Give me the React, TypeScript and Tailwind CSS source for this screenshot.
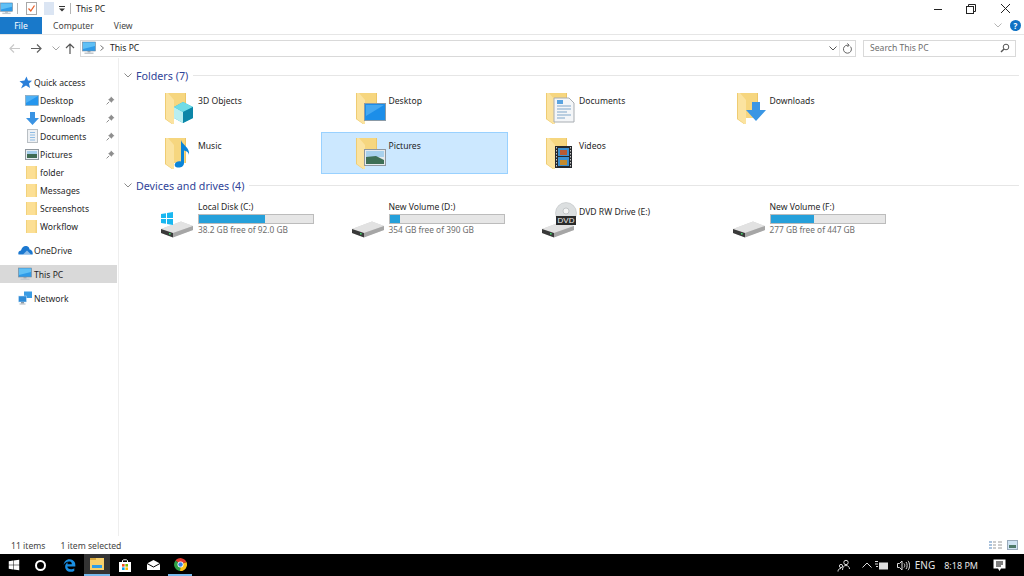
import type { ReactNode } from "react"
import { FaEdgeLegacy, FaWindows } from "react-icons/fa"

const font = "font-['Noto_Sans','Open_Sans',sans-serif]"

function Monitor({ size = 14 }: { size?: number }) {
  return (
    <svg width={size} height={size} viewBox="0 0 14 14">
      <rect x="0.5" y="1" width="13" height="9" fill="#2f9be8" stroke="#7d8a96" strokeWidth="0.6" />
      <polygon points="1,1.5 13,1.5 13,5 1,8" fill="#5fc0f5" />
      <rect x="5.5" y="10" width="3" height="1.5" fill="#9aa5ae" />
      <rect x="2.5" y="11.5" width="9" height="1.5" fill="#c2c8cd" />
    </svg>
  )
}

function SmallFolder() {
  return (
    <svg width="12" height="15" viewBox="0 0 12 15">
      <rect x="0" y="1" width="11" height="13" rx="1" fill="#fcdf94" />
      <rect x="9.5" y="1" width="1.5" height="13" fill="#f2d27c" />
      <rect x="0" y="1" width="1" height="13" fill="#f2d27c" />
    </svg>
  )
}

function Pin() {
  return (
    <svg width="9" height="9" viewBox="0 0 9 9">
      <path d="M5 0.5 L8.5 4 L7 4.6 L5.6 6.8 L2.2 3.4 L4.4 2 Z" fill="#8e8e8e" />
      <path d="M3.2 5.8 L0.6 8.4" stroke="#8e8e8e" strokeWidth="1" />
    </svg>
  )
}

function Star() {
  return (
    <svg width="13" height="13" viewBox="0 0 13 13">
      <polygon points="7.5,0.5 9,4.5 13,4.8 10,7.4 11,12 7,9.6 2,12.4 4,8 0.5,5.2 5.5,4.5" fill="#2a7fd9" />
    </svg>
  )
}

function BlueDesktop() {
  return (
    <svg width="14" height="11" viewBox="0 0 14 11">
      <rect x="0.5" y="0.5" width="13" height="10" fill="#2496ee" stroke="#8aa0b0" strokeWidth="0.6" />
      <polygon points="1,1 13,1 1,8" fill="#4fb1f5" />
    </svg>
  )
}

function DownArrow({ w = 13, h = 13 }: { w?: number; h?: number }) {
  return (
    <svg width={w} height={h} viewBox="0 0 13 13">
      <polygon points="4,0 9,0 9,6 13,6 6.5,13 0,6 4,6" fill="#3a93e3" />
    </svg>
  )
}

function DocSmall() {
  return (
    <svg width="11" height="14" viewBox="0 0 11 14">
      <rect x="0.5" y="0.5" width="10" height="13" fill="#eef1f4" stroke="#b9bfc4" />
      <path d="M3 3.5h5M3 6h5M3 8.5h5M3 11h5" stroke="#8fbce4" strokeWidth="1" />
    </svg>
  )
}

function PicSmall() {
  return (
    <svg width="14" height="11" viewBox="0 0 14 11">
      <rect x="0.5" y="0.5" width="13" height="10" fill="#e8eef2" stroke="#8f979e" />
      <rect x="2" y="2" width="10" height="3" fill="#a4cdea" />
      <rect x="2" y="5" width="10" height="4" fill="#3f6b52" />
    </svg>
  )
}

function Cloud() {
  return (
    <svg width="15" height="10" viewBox="0 0 15 10">
      <path d="M0.5 9.5 C-0.3 7 1.5 5.6 3 5.6 C3.6 2.6 6 0.5 8.5 1 C10.5 1.4 11.5 3 11.6 4.6 C13.6 4.6 15.2 7 14.6 9.5 Z" fill="#1b78d0" />
      <path d="M5 9.5 L9 5.4 L13 9.5 Z" fill="#fff" opacity="0.5" />
    </svg>
  )
}

function NetworkIcon() {
  return (
    <svg width="15" height="14" viewBox="0 0 15 14">
      <rect x="6" y="0.5" width="8" height="6.5" fill="#3a9be3" />
      <rect x="0.5" y="5" width="8" height="6" fill="#2e8ad6" stroke="#cfe5f7" strokeWidth="0.5" />
      <rect x="3" y="11" width="3" height="1.5" fill="#8b98a3" />
      <rect x="1.5" y="12.5" width="6" height="1" fill="#a9b3bb" />
    </svg>
  )
}

function Chevron({ className = "" }: { className?: string }) {
  return (
    <svg width="8" height="5" viewBox="0 0 8 5" className={className}>
      <polyline points="0.5,0.5 4,4 7.5,0.5" fill="none" stroke="currentColor" strokeWidth="1" />
    </svg>
  )
}

function NavRow({ icon, label, pin, indent, active }: { icon: ReactNode; label: string; pin?: boolean; indent?: boolean; active?: boolean }) {
  return (
    <div className={`flex h-[18px] w-[117px] items-center ${active ? "bg-[#d9d9d9]" : ""}`}>
      <div className={`flex w-[16px] justify-center ${indent ? "ml-[24px]" : "ml-[17px]"}`}>{icon}</div>
      <span className={`${indent ? "ml-[0px]" : "ml-[1px]"} pt-[2px] text-[#1f1f1f]`}>{label}</span>
      {pin && (
        <span className="ml-auto mr-[2px]">
          <Pin />
        </span>
      )}
    </div>
  )
}

function BigFolder({ children }: { children?: ReactNode }) {
  return (
    <svg width="38" height="34" viewBox="0 0 38 34">
      <polygon points="0,2 21,2 21,27 7,27 0,27" fill="#f6d67f" />
      <polygon points="20,2 21,2 21,27 20,27" fill="#ecc668" />
      <polygon points="0,2 3,2 9,9 9,33 7,33 0,28" fill="#fbe3a0" />
      <polygon points="0,2 1,2 1,28 7,32.5 7,33 0,28" fill="#efcc72" />
      {children}
    </svg>
  )
}

const folderArt: Record<string, ReactNode> = {
  "3D Objects": (
    <>
      <polygon points="9,16 18,11 28,16 28,27 18,32 9,27" fill="#2fb5d0" />
      <polygon points="9,16 18,21 18,32 9,27" fill="#b9eef0" />
      <polygon points="9,16 18,11 28,16 18,21" fill="#6fdbe6" />
      <polygon points="18,21 28,16 28,27 18,32" fill="#0d86a8" />
    </>
  ),
  Desktop: (
    <>
      <rect x="8.5" y="12.5" width="21" height="17" fill="#1c8ee9" stroke="#8b9aa6" />
      <polygon points="10,14 28,14 10,25" fill="#45a8f1" />
    </>
  ),
  Documents: (
    <>
      <polygon points="8,7 23,7 28,12 28,31 8,31" fill="#f4f6f8" stroke="#a8adb2" />
      <path d="M11 15h14M11 18h14M11 21h10M11 24h14M11 27h8" stroke="#7ea6c9" strokeWidth="1" />
      <rect x="11" y="9" width="6" height="4" fill="#5aa4e0" />
    </>
  ),
  Downloads: (
    <polygon points="15,11 23,11 23,19 29,19 19,30 9,19 15,19" fill="#3a96e4" />
  ),
  Music: (
    <path d="M16 4 C17 9 25 11 24 19 C23.6 16 21 15 19 14.6 L19 27 C19 30.5 15.5 32 12.5 31.5 C9 31 9 27.5 11.5 26 C13 25 15 25 16 25.6 Z" fill="#0a84d8" />
  ),
  Pictures: (
    <>
      <rect x="8.5" y="13.5" width="21" height="16" fill="#e6eaee" stroke="#8f979e" />
      <rect x="10" y="15" width="18" height="6" fill="#a8d1ed" />
      <polygon points="10,21 20,20 28,24 28,28 10,28" fill="#3e6f56" />
    </>
  ),
  Videos: (
    <>
      <rect x="9" y="10" width="17" height="22" fill="#25282c" />
      <rect x="12" y="12" width="11" height="8" fill="#3b8fd0" />
      <rect x="12" y="21" width="11" height="9" fill="#3b8fd0" />
      <rect x="14" y="14" width="7" height="5" fill="#b95a32" />
      <rect x="14" y="24" width="7" height="5" fill="#c48b2f" />
      <path d="M10.5 11v20M24.5 11v20" stroke="#c7c7c7" strokeWidth="1" strokeDasharray="1.5 1.5" />
    </>
  ),
}

function FolderTile({ name, selected }: { name: string; selected?: boolean }) {
  return (
    <div className={`flex h-[42px] w-[187px] border ${selected ? "border-[#99d1ff] bg-[#cce8ff]" : "border-transparent"}`}>
      <div className="ml-[34px] mt-[3px] w-[33px]">
        <BigFolder>{folderArt[name]}</BigFolder>
      </div>
      <span className="mt-[9px] text-[#1f1f1f]">{name}</span>
    </div>
  )
}

function DiskIcon({ windows, dvd }: { windows?: boolean; dvd?: boolean }) {
  return (
    <svg width="34" height="30" viewBox="0 0 34 30" className="overflow-visible">
      {dvd && (
        <>
          <circle cx="25" cy="5" r="10.5" fill="#dcdfe0" stroke="#b4b8ba" strokeWidth="0.5" />
          <circle cx="25" cy="3" r="3" fill="#f5f6f6" stroke="#a9adaf" strokeWidth="0.6" />
        </>
      )}
      <polygon points="1,21 21,13.5 33,18 33,22 13,29 1,25" fill="#d3d3d3" />
      <polygon points="1,21 13,25 33,18 21,13.5" fill="#e2e2e2" />
      <polygon points="1,21 13,25 13,29.5 1,25" fill="#3a3a3a" />
      <polygon points="13,25 33,18 33,22 13,29.5" fill="#a6a6a6" />
      <rect x="9" y="25" width="1.6" height="1.6" fill="#45d06a" />
      {windows && (
        <g fill="#19b7f0">
          <polygon points="1,6 6,5.2 6,10 1,10" />
          <polygon points="7,5 13,4 13,10 7,10" />
          <polygon points="1,11 6,11 6,15.8 1,15" />
          <polygon points="7,11 13,11 13,17 7,16" />
        </g>
      )}
      {dvd && (
        <>
          <rect x="15" y="8" width="20" height="9" fill="#2b2b2b" />
          <text x="25" y="15.4" textAnchor="middle" fontSize="8" fill="#ededed" fontFamily="Liberation Sans">
            DVD
          </text>
        </>
      )}
    </svg>
  )
}

function DriveTile({ name, free, used, windows, dvd }: { name: string; free?: string; used?: number; windows?: boolean; dvd?: boolean }) {
  return (
    <div className="flex h-[42px] w-[187px] border border-transparent">
      <div className="ml-[29px] mt-[9px] w-[38px]">
        <DiskIcon windows={windows} dvd={dvd} />
      </div>
      {free ? (
        <div className="flex flex-col pt-[1px]">
          <span className="h-[14px] leading-[14px] text-[#1f1f1f]">{name}</span>
          <div className="mt-[0px] h-[10px] w-[116px] border border-[#bcbcbc] bg-[#e6e6e6]">
            <div className="h-full bg-[#26a0da]" style={{ width: `${used}%` }} />
          </div>
          <span className="h-[12px] text-[8.3px] leading-[12px] text-[#6d6d6d]">{free}</span>
        </div>
      ) : (
        <span className="mt-[6px] leading-[14px] text-[#1f1f1f]">{name}</span>
      )}
    </div>
  )
}

function SectionHeader({ title }: { title: string }) {
  return (
    <div className="flex h-[16px] items-center pl-[5px] pr-[5px]">
      <Chevron className="text-[#8b8b8b]" />
      <span className="ml-[4px] pt-[2px] text-[10.7px] text-[#2f4398]">{title}</span>
      <div className="ml-[5px] h-px flex-1 bg-[#e6e6e6]" />
    </div>
  )
}

function TitleBar() {
  return (
    <div className="flex h-[17px] items-center">
      <Monitor size={13} />
      <div className="ml-[4px] h-[11px] w-px bg-[#b5b5b5]" />
      <svg width="11" height="13" viewBox="0 0 11 13" className="ml-[8px]">
        <rect x="0.5" y="0.5" width="10" height="12" fill="#fff" stroke="#a8a8a8" />
        <polyline points="2.5,6.5 4.8,9 8.5,3.5" fill="none" stroke="#e8622c" strokeWidth="1.3" />
      </svg>
      <svg width="11" height="13" viewBox="0 0 11 13" className="ml-[7px]">
        <rect x="0" y="0" width="10" height="13" fill="#dbe5f3" />
      </svg>
      <svg width="6" height="6" viewBox="0 0 6 6" className="ml-[4px]">
        <rect x="0" y="0" width="6" height="1" fill="#333" />
        <polygon points="0,2.5 6,2.5 3,5.5" fill="#333" />
      </svg>
      <div className="ml-[5px] h-[11px] w-px bg-[#b5b5b5]" />
      <span className="ml-[5px] pt-[2px] text-[#222]">This PC</span>
      <div className="ml-auto flex items-center">
        <svg width="10" height="10" viewBox="0 0 10 10">
          <path d="M1 5.5h8" stroke="#222" />
        </svg>
        <svg width="10" height="10" viewBox="0 0 10 10" className="ml-[23px]">
          <rect x="0.5" y="2.5" width="7" height="7" fill="#fff" stroke="#222" />
          <path d="M2.5 2V0.5H9.5V7.5H8" fill="none" stroke="#222" />
        </svg>
        <svg width="11" height="11" viewBox="0 0 11 11" className="ml-[24px] mr-[13px]">
          <path d="M1 1L10 10M10 1L1 10" stroke="#222" strokeWidth="1" />
        </svg>
      </div>
    </div>
  )
}

function RibbonTabs() {
  return (
    <div className="flex h-[18px] items-stretch border-b border-[#e6e6e6]">
      <div className="flex w-[42px] items-center justify-center bg-[#1979ca] pt-[2px] text-white">File</div>
      <span className="ml-[11px] self-center pt-[2px] text-[#444]">Computer</span>
      <span className="ml-[20px] self-center pt-[2px] text-[#444]">View</span>
      <div className="ml-auto mr-[3px] flex items-center">
        <Chevron className="mr-[8px] text-[#b5b5b5]" />
        <div className="flex h-[11px] w-[11px] items-center justify-center rounded-full bg-[#0f72c4] text-[8px] font-bold text-white">?</div>
      </div>
    </div>
  )
}

function AddressBar() {
  return (
    <div className="flex h-[23px] items-center pt-[3px]">
      <svg width="11" height="9" viewBox="0 0 11 9" className="ml-[9px] text-[#c9c9c9]">
        <path d="M11 4.5H1M5 0.5L1 4.5L5 8.5" fill="none" stroke="currentColor" strokeWidth="1.2" />
      </svg>
      <svg width="11" height="9" viewBox="0 0 11 9" className="ml-[11px] text-[#5f5f5f]">
        <path d="M0 4.5H10M6 0.5L10 4.5L6 8.5" fill="none" stroke="currentColor" strokeWidth="1.2" />
      </svg>
      <Chevron className="ml-[10px] text-[#a5a5a5]" />
      <svg width="10" height="11" viewBox="0 0 10 11" className="ml-[5px] text-[#555]">
        <path d="M5 11V1M1 5L5 1L9 5" fill="none" stroke="currentColor" strokeWidth="1.2" />
      </svg>
      <div className="ml-[5px] flex h-[17px] w-[776px] items-center border border-[#d9d9d9] pl-[1px]">
        <Monitor size={14} />
        <svg width="4" height="6" viewBox="0 0 4 6" className="ml-[4px]">
          <polyline points="0.5,0.5 3.5,3 0.5,5.5" fill="none" stroke="#777" />
        </svg>
        <span className="ml-[6px] text-[#222]">This PC</span>
        <Chevron className="ml-auto text-[#555]" />
        <div className="ml-[2px] mr-[2px] h-full w-px bg-[#e6e6e6]" />
        <svg width="10" height="11" viewBox="0 0 10 11" className="mr-[3px]">
          <path d="M8.5 3.6A4 4 0 1 1 5 2.2H7M5.4 0.4L7.2 2.2L5.4 4" fill="none" stroke="#666" />
        </svg>
      </div>
      <div className="ml-[7px] flex h-[17px] w-[153px] items-center border border-[#d9d9d9] pl-[6px] text-[#6d6d6d]">
        Search This PC
        <svg width="10" height="10" viewBox="0 0 10 10" className="ml-auto mr-[5px]">
          <circle cx="6" cy="4" r="2.8" fill="none" stroke="#555" />
          <path d="M4 6L1 9" stroke="#555" strokeWidth="1.4" />
        </svg>
      </div>
    </div>
  )
}

function NavPane() {
  return (
    <div className="flex w-[119px] shrink-0 flex-col border-r border-[#eeeeee] pt-[15px]">
      <NavRow icon={<Star />} label="Quick access" />
      <NavRow indent icon={<BlueDesktop />} label="Desktop" pin />
      <NavRow indent icon={<DownArrow />} label="Downloads" pin />
      <NavRow indent icon={<DocSmall />} label="Documents" pin />
      <NavRow indent icon={<PicSmall />} label="Pictures" pin />
      <NavRow indent icon={<SmallFolder />} label="folder" />
      <NavRow indent icon={<SmallFolder />} label="Messages" />
      <NavRow indent icon={<SmallFolder />} label="Screenshots" />
      <NavRow indent icon={<SmallFolder />} label="Workflow" />
      <div className="h-[6px]" />
      <NavRow icon={<Cloud />} label="OneDrive" />
      <div className="h-[6px]" />
      <NavRow active icon={<Monitor size={14} />} label="This PC" />
      <div className="h-[6px]" />
      <NavRow icon={<NetworkIcon />} label="Network" />
    </div>
  )
}

function Content() {
  return (
    <div className="flex-1 pt-[9px]">
      <SectionHeader title="Folders (7)" />
      <div className="ml-[11px] mt-[4px] grid grid-cols-[repeat(4,187px)] gap-x-[3.5px] gap-y-[3px]">
        <FolderTile name="3D Objects" />
        <FolderTile name="Desktop" />
        <FolderTile name="Documents" />
        <FolderTile name="Downloads" />
        <FolderTile name="Music" />
        <FolderTile name="Pictures" selected />
        <FolderTile name="Videos" />
      </div>
      <div className="mt-[3px]">
        <SectionHeader title="Devices and drives (4)" />
      </div>
      <div className="ml-[11px] mt-[5px] grid grid-cols-[repeat(4,187px)] gap-x-[3.5px]">
        <DriveTile name="Local Disk (C:)" free="38.2 GB free of 92.0 GB" used={58} windows />
        <DriveTile name="New Volume (D:)" free="354 GB free of 390 GB" used={9} />
        <DriveTile name="DVD RW Drive (E:)" dvd />
        <DriveTile name="New Volume (F:)" free="277 GB free of 447 GB" used={38} />
      </div>
    </div>
  )
}

function StatusBar() {
  return (
    <div className="flex h-[18px] items-center text-[#444]">
      <span className="ml-[11px] pt-[2px]">11 items</span>
      <span className="ml-[15px] pt-[2px]">1 item selected</span>
      <div className="ml-auto mr-[6px] flex items-center gap-[5px]">
        <svg width="13" height="10" viewBox="0 0 13 10">
          <path d="M0 1h3v2H0zM0 4h3v2H0zM0 7h3v2H0z" fill="#a9c2dd" />
          <path d="M4 2h3M4 5h3M4 8h3M9 2h4M9 5h4M9 8h4" stroke="#9a9a9a" />
        </svg>
        <svg width="11" height="10" viewBox="0 0 11 10">
          <rect x="0.5" y="0.5" width="10" height="9" fill="#cfe3f3" stroke="#9ab" />
          <rect x="2" y="5" width="7" height="3" fill="#4f7a6a" />
        </svg>
      </div>
    </div>
  )
}

function Taskbar() {
  return (
    <div className="flex h-[22px] items-stretch bg-black text-white">
      <div className="flex w-[27px] items-center justify-center">
        <FaWindows size={12} />
      </div>
      <div className="flex w-[27px] items-center justify-center">
        <div className="h-[11px] w-[11px] rounded-full border-2 border-white" />
      </div>
      <div className="flex w-[30px] items-center justify-center text-[#1a8fe3]">
        <FaEdgeLegacy size={13} />
      </div>
      <div className="flex w-[26px] items-center justify-center border-b-2 border-[#76b9ed] bg-[#333333]">
        <svg width="14" height="12" viewBox="0 0 14 12">
          <rect x="0" y="0" width="14" height="12" fill="#f6cf6b" />
          <rect x="0" y="0" width="6" height="2" fill="#d9a93f" />
          <rect x="2" y="7" width="10" height="3" fill="#2d9ce6" />
        </svg>
      </div>
      <div className="flex w-[30px] items-center justify-center">
        <svg width="12" height="13" viewBox="0 0 12 13">
          <rect x="0" y="3" width="12" height="10" fill="#fff" />
          <path d="M3.5 3V1.5C3.5 0.5 8.5 0.5 8.5 1.5V3" fill="none" stroke="#fff" />
          <rect x="3" y="5" width="2.6" height="2.6" fill="#f25022" />
          <rect x="6.4" y="5" width="2.6" height="2.6" fill="#7fba00" />
          <rect x="3" y="8.4" width="2.6" height="2.6" fill="#00a4ef" />
          <rect x="6.4" y="8.4" width="2.6" height="2.6" fill="#ffb900" />
        </svg>
      </div>
      <div className="flex w-[26px] items-center justify-center">
        <svg width="13" height="10" viewBox="0 0 13 10">
          <polygon points="0,3.5 6.5,0 13,3.5 13,10 0,10" fill="#fff" />
          <polyline points="0,3.5 6.5,7 13,3.5" fill="none" stroke="#000" />
        </svg>
      </div>
      <div className="ml-[2px] flex w-[24px] items-center justify-center border-b-2 border-[#76b9ed]">
        <svg width="13" height="13" viewBox="0 0 26 26">
          <path d="M13 13L3 5A13 13 0 0 1 25 8Z" fill="#e33b2e" />
          <path d="M13 13L25 8A13 13 0 0 1 12 26Z" fill="#fbc116" />
          <path d="M13 13L12 26A13 13 0 0 1 3 5Z" fill="#2f9e44" />
          <circle cx="13" cy="13" r="6" fill="#fff" />
          <circle cx="13" cy="13" r="4.5" fill="#3b82e6" />
        </svg>
      </div>
      <div className="ml-auto flex items-center text-[10px] text-[#e6e6e6]">
        <svg width="14" height="13" viewBox="0 0 14 13">
          <circle cx="9" cy="3.5" r="2.2" fill="none" stroke="#ddd" />
          <path d="M5.5 11C5.5 8 7 6.5 9 6.5S12.5 8 12.5 10" fill="none" stroke="#ddd" />
          <circle cx="4" cy="7" r="1.6" fill="none" stroke="#ddd" />
          <path d="M1 12.5C1 10.5 2.2 9.5 4 9.5" fill="none" stroke="#ddd" />
        </svg>
        <svg width="10" height="6" viewBox="0 0 10 6" className="ml-[11px]">
          <polyline points="0.5,5.5 5,1 9.5,5.5" fill="none" stroke="#ddd" />
        </svg>
        <svg width="13" height="9" viewBox="0 0 13 9" className="ml-[3px]">
          <rect x="4" y="1.5" width="9" height="7" fill="#ddd" />
          <path d="M0 0.5h3M0 3h3M1 5.5h2" stroke="#ddd" />
        </svg>
        <svg width="13" height="11" viewBox="0 0 13 11" className="ml-[9px]">
          <path d="M0.5 3.5H2.5L5 1V10L2.5 7.5H0.5Z" fill="none" stroke="#ddd" />
          <path d="M7 3.5C8 4.5 8 6.5 7 7.5M9 2C10.5 3.5 10.5 7.5 9 9M11 0.8C13 3 13 8 11 10.2" fill="none" stroke="#ddd" />
        </svg>
        <span className="ml-[5px]">ENG</span>
        <span className="ml-[9px] text-[9px]">8:18 PM</span>
        <svg width="13" height="13" viewBox="0 0 13 13" className="ml-[15px] mr-[18px]">
          <path d="M0.5 0.5H12.5V9.5H8L6.5 12L5 9.5H0.5Z" fill="#fff" />
          <path d="M3 3h7M3 5h7M3 7h5" stroke="#000" />
        </svg>
      </div>
    </div>
  )
}

export default function App() {
  return (
    <div className={`flex h-[576px] w-[1024px] flex-col overflow-hidden bg-white text-[8.6px] leading-none ${font}`}>
      <TitleBar />
      <RibbonTabs />
      <AddressBar />
      <div className="flex flex-1">
        <NavPane />
        <Content />
      </div>
      <StatusBar />
      <Taskbar />
    </div>
  )
}
